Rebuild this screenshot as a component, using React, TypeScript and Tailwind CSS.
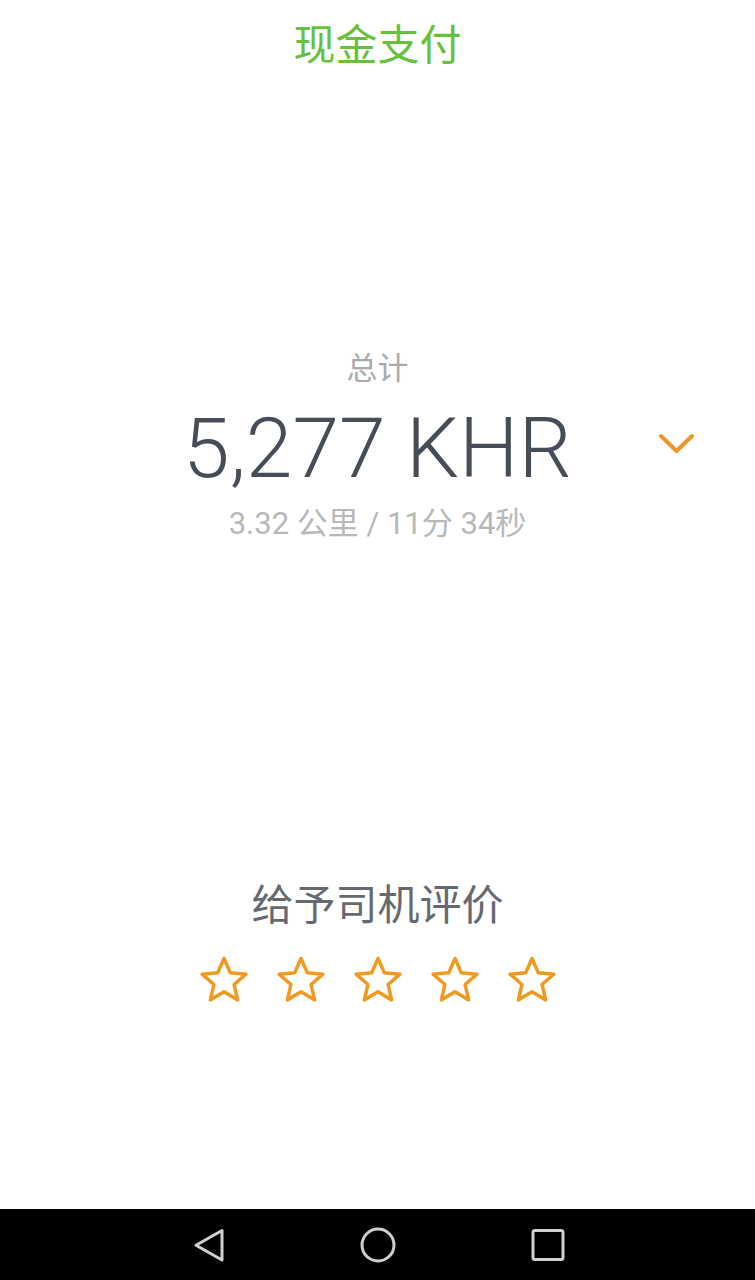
import React from 'react';

const StarOutline = () => (
  <svg width="56" height="56" viewBox="0 0 46 46" fill="none">
    <path
      d="M23 4.5 L28.2 16.3 L41 17.4 L31.3 25.9 L34.2 38.5 L23 31.8 L11.8 38.5 L14.7 25.9 L5 17.4 L17.8 16.3 Z"
      stroke="#f09a22"
      strokeWidth="2.9"
      strokeLinejoin="round"
    />
  </svg>
);

const Chevron = () => (
  <svg width="37" height="22" viewBox="0 0 37 22" fill="none">
    <path d="M3 3 L18.5 18 L34 3" stroke="#f0952a" strokeWidth="4" strokeLinecap="round" strokeLinejoin="round" />
  </svg>
);

export default function App() {
  const sans = "font-['Roboto','Noto_Sans_CJK_SC',sans-serif]";
  return (
    <div className={`flex h-[1280px] w-[755px] flex-col bg-white ${sans}`}>
      <div className="flex flex-1 flex-col items-center">
        {/* header */}
        <div className="mt-[25px] text-[42px] leading-[42px] text-[#66c13c]">现金支付</div>

        {/* total */}
        <div className="mt-[286px] text-[31px] leading-[31px] text-[#ababab]">总计</div>
        <div className="relative w-full">
          <div className="mt-[23px] text-center text-[84px] font-light leading-[84px] text-[#474d56]">5,277 KHR</div>
          <div className="absolute left-[658px] top-[49px]">
            <Chevron />
          </div>
        </div>
        <div className="mt-[17px] text-[31px] leading-[31px] text-[#b8b8b8]">3.32 公里 / 11分 34秒</div>

        {/* rating */}
        <div className="mt-[346px] text-[42px] leading-[42px] text-[#666a70]">给予司机评价</div>
        <div className="mt-[26px] flex gap-[21px]">
          <StarOutline />
          <StarOutline />
          <StarOutline />
          <StarOutline />
          <StarOutline />
        </div>
      </div>

      {/* android nav bar */}
      <div className="flex h-[71px] items-center justify-center gap-[134px] bg-black">
        <svg width="36" height="36" viewBox="0 0 36 36" fill="none">
          <path d="M32 3.5 L32 33 L6 18.2 Z" stroke="#cfcfcf" strokeWidth="3" strokeLinejoin="round" />
        </svg>
        <svg width="36" height="36" viewBox="0 0 36 36" fill="none">
          <circle cx="18" cy="18" r="16" stroke="#cfcfcf" strokeWidth="3" />
        </svg>
        <svg width="36" height="36" viewBox="0 0 36 36" fill="none">
          <rect x="3" y="3.5" width="30" height="29" rx="2" stroke="#cfcfcf" strokeWidth="3" />
        </svg>
      </div>
    </div>
  );
}
